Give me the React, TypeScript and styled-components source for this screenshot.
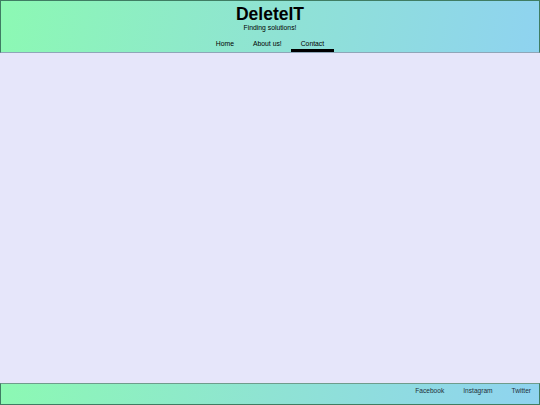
import styled, { createGlobalStyle } from 'styled-components';

const GlobalStyle = createGlobalStyle`
  html, body, #root {
    margin: 0;
    padding: 0;
    height: 100%;
  }
  body {
    font-family: 'Liberation Sans', Arial, sans-serif;
    background-color: #e6e6fa;
    color: #000000;
  }
`;

const Page = styled.div`
  display: flex;
  flex-direction: column;
  height: 100vh;
`;

const Header = styled.header`
  box-sizing: border-box;
  height: 53px;
  display: flex;
  flex-direction: column;
  align-items: center;
  border: 1px solid #3f7d63;
  border-bottom: 1px solid #8fa6b8;
  background: linear-gradient(100deg, #8cf9b3 0%, #8fe3d3 50%, #8fd3f0 100%);
`;

const Title = styled.h1`
  margin: 3px 0 0;
  font-size: 17.5px;
  line-height: 20px;
  font-weight: 700;
`;

const Tagline = styled.p`
  margin: 0;
  font-size: 6.8px;
  line-height: 7px;
`;

const Nav = styled.nav`
  display: flex;
  margin-top: auto;
`;

const NavLink = styled.a<{ $active?: boolean }>`
  display: block;
  padding: 0 9.5px;
  font-size: 6.8px;
  line-height: 10px;
  color: #000000;
  text-decoration: none;
  border-bottom: 3px solid ${(p) => (p.$active ? '#000000' : 'transparent')};
`;

const Main = styled.main`
  flex: 1;
  background-color: #e6e6fa;
`;

const Footer = styled.footer`
  box-sizing: border-box;
  height: 22px;
  display: flex;
  justify-content: flex-end;
  align-items: flex-start;
  gap: 3px;
  padding-top: 2px;
  border: 1px solid #3f7d63;
  border-top: 1px solid #6f9c8c;
  background: linear-gradient(100deg, #8cf9b3 0%, #8fe3d3 50%, #8fd3f0 100%);
`;

const FooterLink = styled.a`
  padding: 0 8px;
  font-size: 6.6px;
  line-height: 10px;
  color: #1f2f3a;
  text-decoration: none;
`;

const App = () => (
  <>
    <GlobalStyle />
    <Page>
      <Header>
        <Title>DeleteIT</Title>
        <Tagline>Finding solutions!</Tagline>
        <Nav>
          <NavLink href='#'>Home</NavLink>
          <NavLink href='#'>About us!</NavLink>
          <NavLink href='#' $active>
            Contact
          </NavLink>
        </Nav>
      </Header>
      <Main />
      <Footer>
        <FooterLink href='#'>Facebook</FooterLink>
        <FooterLink href='#'>Instagram</FooterLink>
        <FooterLink href='#'>Twitter</FooterLink>
      </Footer>
    </Page>
  </>
);

export default App;
